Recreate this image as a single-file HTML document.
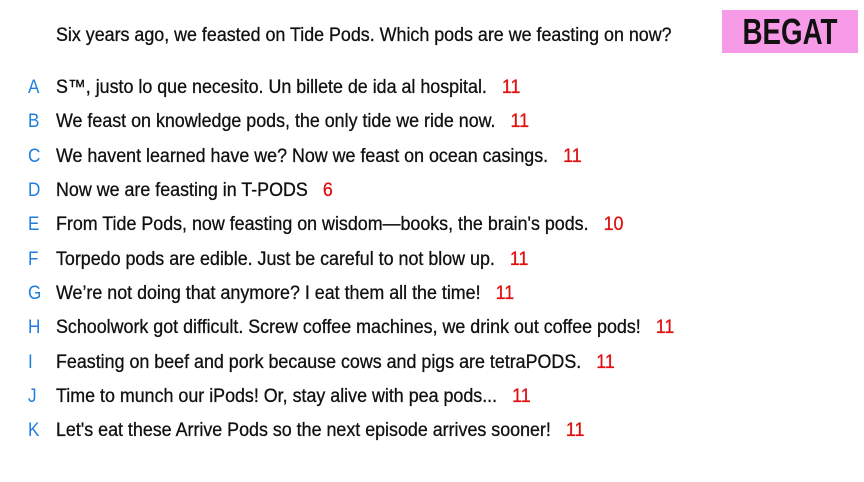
<!DOCTYPE html>
<html><head><meta charset="utf-8"><style>
body{margin:0;width:864px;height:482px;background:#fff;position:relative;overflow:hidden;font-family:"Liberation Sans Narrow","Liberation Sans",sans-serif;color:#111;}
.r{position:absolute;left:56px;font-size:19px;white-space:nowrap;transform:scaleX(0.94);transform-origin:left center;line-height:24px;-webkit-text-stroke:0.3px #111;}
.l{position:absolute;left:28px;font-size:19px;color:#1e7fe0;line-height:24px;transform:scaleX(0.9);transform-origin:left center;}
.n{color:#e01010;margin-left:16px;-webkit-text-stroke:0.3px #e01010;}
.box{position:absolute;left:722px;top:10px;width:136px;height:43px;background:#f79be8;}
.box span{position:absolute;left:0;width:136px;top:0;text-align:center;font-size:36px;font-weight:bold;line-height:43px;transform:scaleX(0.77);color:#111;}
</style></head><body>
<div class="r" style="top:24px">Six years ago, we feasted on Tide Pods. Which pods are we feasting on now?</div>
<div class="box"><span>BEGAT</span></div>
<div class="l" style="top:76px">A</div><div class="r" style="top:76px">S™, justo lo que necesito. Un billete de ida al hospital.<span class="n">11</span></div>
<div class="l" style="top:110px">B</div><div class="r" style="top:110px">We feast on knowledge pods, the only tide we ride now.<span class="n">11</span></div>
<div class="l" style="top:145px">C</div><div class="r" style="top:145px">We havent learned have we? Now we feast on ocean casings.<span class="n">11</span></div>
<div class="l" style="top:179px">D</div><div class="r" style="top:179px">Now we are feasting in T-PODS<span class="n">6</span></div>
<div class="l" style="top:213px">E</div><div class="r" style="top:213px">From Tide Pods, now feasting on wisdom—books, the brain's pods.<span class="n">10</span></div>
<div class="l" style="top:248px">F</div><div class="r" style="top:248px">Torpedo pods are edible. Just be careful to not blow up.<span class="n">11</span></div>
<div class="l" style="top:282px">G</div><div class="r" style="top:282px">We’re not doing that anymore? I eat them all the time!<span class="n">11</span></div>
<div class="l" style="top:316px">H</div><div class="r" style="top:316px">Schoolwork got difficult. Screw coffee machines, we drink out coffee pods!<span class="n">11</span></div>
<div class="l" style="top:351px">I</div><div class="r" style="top:351px">Feasting on beef and pork because cows and pigs are tetraPODS.<span class="n">11</span></div>
<div class="l" style="top:385px">J</div><div class="r" style="top:385px">Time to munch our iPods! Or, stay alive with pea pods...<span class="n">11</span></div>
<div class="l" style="top:419px">K</div><div class="r" style="top:419px">Let's eat these Arrive Pods so the next episode arrives sooner!<span class="n">11</span></div>
</body></html>
